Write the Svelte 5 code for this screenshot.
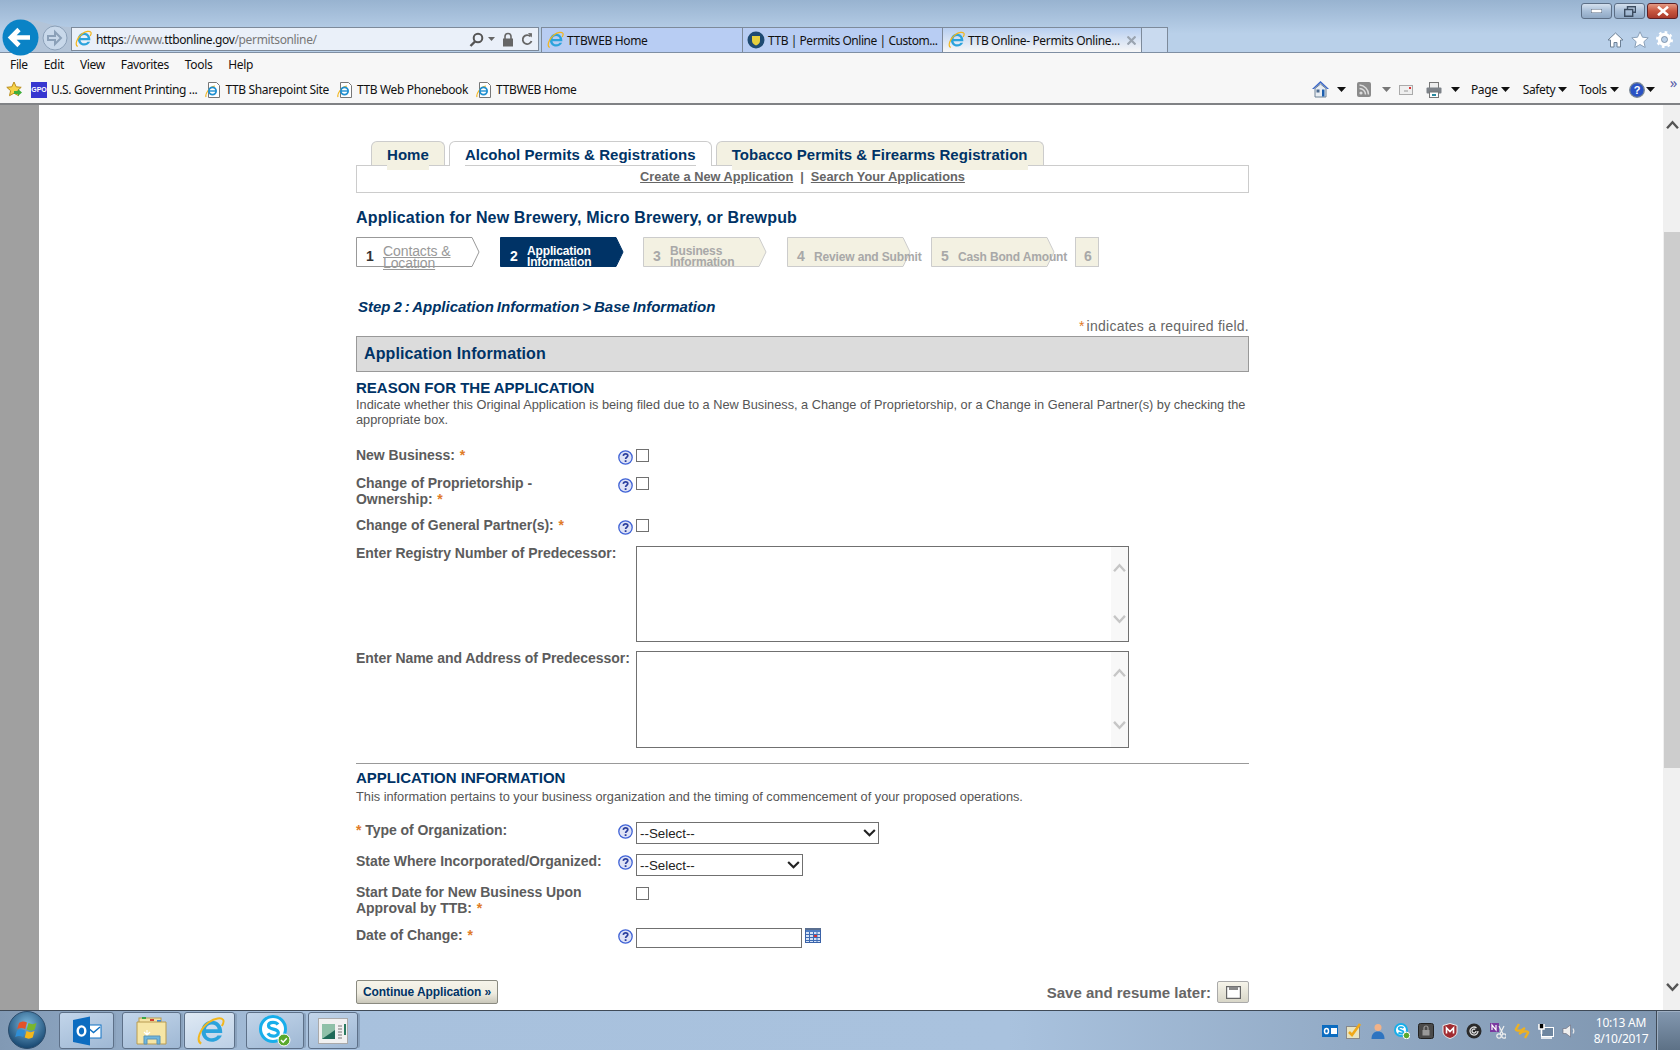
<script>
	const menus = ['File', 'Edit', 'View', 'Favorites', 'Tools', 'Help'];
	const favs = ['TTB Sharepoint Site', 'TTB Web Phonebook', 'TTBWEB Home'];
	const steps = [
		{ n: 1, label: ['Contacts &', 'Location'], cls: 'first' },
		{ n: 2, label: ['Application', 'Information'], cls: 'current' },
		{ n: 3, label: ['Business', 'Information'], cls: 'off two' },
		{ n: 4, label: ['Review and Submit'], cls: 'off' },
		{ n: 5, label: ['Cash Bond Amount'], cls: 'off' }
	];
</script>

{#snippet ie(size)}
	<svg class="ico" width={size} height={size} viewBox="0 0 24 24">
		<path fill="#2ba3dc" fill-rule="evenodd" d="M21.800 13.500H8.600c.3 2.700 2.400 4.300 4.900 4.300 2 0 3.500-.8 4.500-2.200h3.500c-1.400 3-4.400 5-8 5-4.800 0-8.300-3.500-8.300-8.400S8.700 3.800 13.500 3.800s8.500 3.700 8.300 9.700zM8.700 10.500h9.500c-.4-2.300-2.300-3.700-4.700-3.700s-4.400 1.400-4.800 3.700z" />
		<path fill="none" stroke="#f2b61d" stroke-width="1.600" d="M5 22C.5 20 4 10 11 5c5-3.500 10-4 11.500-2 .9 1.300.2 3-1 5" />
	</svg>
{/snippet}

{#snippet docIe()}
	<svg class="ico" width="16" height="16" viewBox="0 0 16 16">
		<path fill="#fff" stroke="#777" d="M3.500 .5h8l3 3v12h-11z" />
		<path fill="none" stroke="#f2b61d" stroke-width="1.200" d="M1 15C0 12 4 5 10 4" />
		<circle cx="7.500" cy="9" r="3.600" fill="none" stroke="#1f8fd0" stroke-width="1.800" />
		<path stroke="#1f8fd0" stroke-width="1.400" d="M4 9h7" />
	</svg>
{/snippet}

{#snippet caret(cls = '')}
	<svg class="caret {cls}" width="9" height="5" viewBox="0 0 9 5"><path d="M0 0h9L4.500 5z" /></svg>
{/snippet}

{#snippet help()}
	<svg class="help" width="15" height="15" viewBox="0 0 15 15">
		<circle cx="7.500" cy="7.500" r="6.700" fill="#dfe3f6" stroke="#3f62d6" stroke-width="1.300" />
		<path fill="none" stroke="#2b3f9e" stroke-width="1.700" d="M5.300 5.800c.2-1.400 1.200-2 2.300-2 1.300 0 2.200.8 2.200 1.900 0 1.500-2.200 1.600-2.200 3.300" />
		<rect x="6.700" y="10.200" width="1.800" height="1.800" fill="#2b3f9e" />
	</svg>
{/snippet}

{#snippet chev(up, color, w)}
	<svg width={w} height={w * 0.7} viewBox="0 0 14 10">
		<path fill="none" stroke={color} stroke-width="2.600" d={up ? 'M1 9l6-6.500 6 6.500' : 'M1 1l6 6.500L13 1'} />
	</svg>
{/snippet}

{#snippet textbox(cls = '')}
	<div class="ta {cls}">
		<textarea></textarea>
		<div class="ta-sb">
			{@render chev(true, '#c6c6c6', 13)}
			{@render chev(false, '#c6c6c6', 13)}
		</div>
	</div>
{/snippet}

{#snippet pick(cls)}
	<div class="pick {cls}">
		<select><option>--Select--</option></select>
		<svg width="13" height="8" viewBox="0 0 14 9"><path fill="none" stroke="#222" stroke-width="2.400" d="M1 1l6 6 6-6" /></svg>
	</div>
{/snippet}

<div class="screen">
	<header class="titlebar">
		<div class="winbar">
			<button class="win">
				<svg width="11" height="4"><rect width="11" height="4" fill="#fff" stroke="#50627a" /></svg>
			</button>
			<button class="win">
				<svg width="12" height="11" viewBox="0 0 12 11"><path fill="none" stroke="#3c4c60" stroke-width="1.400" d="M3.500 3V.7h8v5.600H9M.7 3.500h8v6.800h-8z" /></svg>
			</button>
			<button class="win close">
				<svg width="12" height="10" viewBox="0 0 12 10"><path stroke="#fff" stroke-width="2.600" d="M1 .8l10 8.400M11 .8L1 9.200" /></svg>
			</button>
		</div>
		<div class="navrow">
			<svg class="shoulder" width="54" height="33" viewBox="0 0 54 33">
				<path fill="#b3c4d8" d="M0 0C22 0 30 8 54 8v25H0z" />
			</svg>
			<svg class="back" width="37" height="37" viewBox="0 0 37 37">
				<circle cx="18.500" cy="18.500" r="18" fill="#0a83c6" />
				<path fill="none" stroke="#fff" stroke-width="4.600" d="M28 18.500H10M17 10.500l-8 8 8 8" />
			</svg>
			<svg class="forward" width="26" height="26" viewBox="0 0 26 26">
				<circle cx="13" cy="13" r="12" fill="#c8d8ea" stroke="#8ba0b8" />
				<path fill="none" stroke="#8ba0b8" stroke-width="2" d="M6 11h7V7l6 6-6 6v-4H6z" />
			</svg>
			<div class="address">
				{@render ie(18)}
				<span class="url"><b>https</b>://www.<b>ttbonline.gov</b>/permitsonline/</span>
				<svg class="a-ico" width="15" height="15" viewBox="0 0 15 15"><circle cx="9" cy="6" r="4.300" fill="none" stroke="#555" stroke-width="2" /><path stroke="#555" stroke-width="2.400" d="M6 9.500l-4.500 4.500" /></svg>
				<svg class="a-caret" width="7" height="4"><path d="M0 0h7L3.500 4z" fill="#666" /></svg>
				<svg class="a-ico" width="12" height="15" viewBox="0 0 12 15"><path fill="none" stroke="#666" stroke-width="1.600" d="M3 7V4.500a3 3 0 0 1 6 0V7" /><rect x="1" y="6.500" width="10" height="8" fill="#666" /></svg>
				<svg class="a-ico" width="12" height="15" viewBox="0 0 12 15"><path fill="none" stroke="#666" stroke-width="1.800" d="M9.500 4.500A4.500 4.500 0 1 0 10.500 9" /><path fill="#666" d="M7 1l4 .2-.2 4.300z" /></svg>
			</div>
			<div class="tab-strip">
				<div class="btab one">{@render ie(18)}<span>TTBWEB Home</span></div>
				<div class="btab two">
					<svg class="ico" width="18" height="18" viewBox="0 0 18 18"><circle cx="9" cy="9" r="8.500" fill="#1e4a72" /><path fill="#e6cf3c" d="M5 5h8v5c0 2-2 3.500-4 4.500C7 13.500 5 12 5 10z" /></svg>
					<span>TTB | Permits Online | Custom...</span>
				</div>
				<div class="btab active">
					{@render ie(18)}<span>TTB Online- Permits Online...</span>
					<svg class="x" width="9" height="9" viewBox="0 0 9 9"><path stroke="#9aa4b0" stroke-width="2.200" d="M.5.500l8 8M8.500.500l-8 8" /></svg>
				</div>
				<div class="btab blank"></div>
			</div>
			<div class="ie-tools">
				<svg width="17" height="16" viewBox="0 0 17 16"><path fill="#fff" stroke="#6d8095" d="M8.500 1L1 8h2.500v7h3.500v-4.500h3V15h3.500V8H16z" /></svg>
				<svg width="18" height="17" viewBox="0 0 18 17"><path fill="#fff" stroke="#8aa0b8" d="M9 .8l2.500 5.400 5.700.6-4.300 3.900 1.300 5.800L9 13.500l-5.200 3 1.300-5.800L.8 6.800l5.700-.6z" /></svg>
				<svg width="17" height="17" viewBox="0 0 17 17"><circle cx="8.500" cy="8.500" r="5" fill="none" stroke="#fff" stroke-width="3.600" /><circle cx="8.500" cy="8.500" r="7.400" fill="none" stroke="#fff" stroke-width="2.200" stroke-dasharray="2.600 3.200" /><circle cx="8.500" cy="8.500" r="3" fill="none" stroke="#6d8095" stroke-width=".7" /></svg>
			</div>
		</div>
	</header>

	<div class="toolbars">
		<nav class="menubar">
			{#each menus as m}<span>{m}</span>{/each}
		</nav>
		<div class="favbar">
			<svg class="ico star" width="17" height="17" viewBox="0 0 17 17">
				<path fill="#f7d34a" stroke="#b98d1e" d="M8 1l2.200 4.800 5 .5-3.800 3.400 1.100 5L8 12.200l-4.500 2.500 1.100-5L.8 6.300l5-.5z" />
				<path fill="#3fae3a" d="M8 10h4V8l4 3.500-4 3.500v-2H8z" />
			</svg>
			<span class="gpo">GPO</span>
			<span class="fav first-fav">U.S. Government Printing ...</span>
			{#each favs as f}
				<span class="fav">{@render docIe()}{f}</span>
			{/each}
			<div class="cmd">
				<svg class="c-home" width="17" height="17" viewBox="0 0 17 17"><path fill="#3b67c8" d="M8.500 0L0 8h2L8.500 2 15 8h2z" /><path fill="#e8edf2" stroke="#6e8296" d="M3 7.500L8.500 3 14 7.500V16H3z" /><rect x="4.500" y="8.500" width="3" height="3" fill="#4b6a90" /><rect x="10" y="8.500" width="2.500" height="7" fill="#1d5fae" /></svg>
				{@render caret()}
				<svg class="c-rss" width="14" height="15" viewBox="0 0 14 15"><rect width="14" height="15" rx="2" fill="#8b8b8b" /><circle cx="4" cy="11" r="1.600" fill="#ddd" /><path fill="none" stroke="#ddd" stroke-width="1.500" d="M2.500 6.500a6 6 0 0 1 6 6M2.500 3a9.500 9.500 0 0 1 9 9.500" /></svg>
				{@render caret('dim')}
				<svg class="c-mail" width="14" height="10" viewBox="0 0 14 10"><rect x=".5" y=".5" width="13" height="9" fill="#efefef" stroke="#aaa" /><rect x="10" y="2" width="2" height="2" fill="#d33" /><path stroke="#999" d="M5 6h4" /></svg>
				<svg class="c-print" width="16" height="16" viewBox="0 0 16 16"><rect x="3.500" y=".5" width="9" height="6" fill="#eee" stroke="#777" /><rect x=".5" y="5.500" width="15" height="6" rx="1" fill="#7d8288" /><rect x="3.500" y="10" width="9" height="5.500" fill="#fff" stroke="#777" /><rect x="6" y="12" width="4" height="2" fill="#2a8aa0" /></svg>
				{@render caret()}
				<span class="c-txt pg">Page</span>{@render caret()}
				<span class="c-txt safety">Safety</span>{@render caret()}
				<span class="c-txt tools">Tools</span>{@render caret()}
				<svg class="c-help" width="16" height="16" viewBox="0 0 16 16"><circle cx="8" cy="8" r="7.300" fill="#2a52c4" stroke="#7a8794" stroke-width="1.300" /><text x="8" y="12" text-anchor="middle" font-family="Liberation Sans" font-weight="700" font-size="11" fill="#fff">?</text></svg>
				{@render caret()}
				<span class="more">»</span>
			</div>
		</div>
	</div>

	<div class="viewport">
		<div class="gutter"></div>
		<main class="page">
			<div class="wrap">
				<div class="tabs">
					<a class="tab">
						<span>Home</span>
					</a>
					<a class="tab on">
						<span>Alcohol Permits &amp; Registrations</span>
					</a>
					<a class="tab">
						<span>Tobacco Permits &amp; Firearms Registration</span>
					</a>
				</div>
				<div class="subnav">
					<a>Create a New Application</a><i>|</i><a>Search Your Applications</a>
				</div>

				<h1>Application for New Brewery, Micro Brewery, or Brewpub</h1>

				<ol class="steps">
					{#each steps as s}
						<li class="step {s.cls}">
							<svg class="shape" width="124" height="30" viewBox="0 0 124 30">
								<path d="M.5.500H116l7 14.500-7 14.500H.5z" />
							</svg>
							<b>{s.n}</b>
							<span class="lbl">
								{#each s.label as l}<span>{l}</span>{/each}
							</span>
						</li>
					{/each}
					<li class="step off last"><b>6</b></li>
				</ol>

				<p class="crumb">Step 2 : Application Information &gt; Base Information</p>
				<p class="req"><em>*</em>indicates a required field.</p>

				<h2 class="band">Application Information</h2>

				<h3>REASON FOR THE APPLICATION</h3>
				<p class="intro">Indicate whether this Original Application is being filed due to a New Business, a Change of Proprietorship, or a Change in General Partner(s) by checking the appropriate box.</p>

				<div class="rows upper">
					<div class="row">
						<label>New Business: <em>*</em></label>
						{@render help()}
						<input type="checkbox" />
					</div>
					<div class="row">
						<label>Change of Proprietorship -<br />Ownership: <em>*</em></label>
						{@render help()}
						<input type="checkbox" />
					</div>
					<div class="row">
						<label>Change of General Partner(s): <em>*</em></label>
						{@render help()}
						<input type="checkbox" />
					</div>
					<div class="row wide first-ta">
						<label>Enter Registry Number of Predecessor:</label>
						<span></span>
						{@render textbox('short-ta')}
					</div>
					<div class="row wide">
						<label>Enter Name and Address of Predecessor:</label>
						<span></span>
						{@render textbox()}
					</div>
				</div>

				<hr />

				<h3>APPLICATION INFORMATION</h3>
				<p class="intro">This information pertains to your business organization and the timing of commencement of your proposed operations.</p>

				<div class="rows lower">
					<div class="row typ">
						<label><em class="lead">*</em> Type of Organization:</label>
						{@render help()}
						{@render pick('big')}
					</div>
					<div class="row short">
						<label>State Where Incorporated/Organized:</label>
						{@render help()}
						{@render pick('small')}
					</div>
					<div class="row startd">
						<label>Start Date for New Business Upon<br />Approval by TTB: <em>*</em></label>
						<span></span>
						<input type="checkbox" />
					</div>
					<div class="row">
						<label>Date of Change: <em>*</em></label>
						{@render help()}
						<div class="date">
							<input type="text" />
							<svg width="16" height="15" viewBox="0 0 16 15">
								<rect x=".5" y="1.500" width="15" height="13" fill="#d5e2f6" stroke="#3a62a8" />
								<rect x="0" y="0" width="16" height="2" fill="#5a6f90" />
								<rect x="1" y="2" width="14" height="2" fill="#4f7ec4" />
								<path stroke="#3f6cb4" d="M1 6.500h14M1 9.500h14M1 12.500h14M4.500 4v10M8.500 4v10M12 4v10" />
								<rect x="9" y="7" width="3" height="2" fill="#d33" />
							</svg>
						</div>
					</div>
				</div>

				<div class="actions">
					<button class="go">Continue Application »</button>
					<div class="save">
						<span>Save and resume later:</span>
						<button aria-label="Save">
							<svg width="15" height="13" viewBox="0 0 15 13"><path fill="#fff" stroke="#666" stroke-width="1.200" d="M.6.600h13.800v11.800H.6z" /><path fill="#888" d="M3 .600h9V4H3z" /></svg>
						</button>
					</div>
				</div>
			</div>
		</main>
		<aside class="vbar">
			<div class="vbar-btn">{@render chev(true, '#555', 13)}</div>
			<div class="thumb"></div>
			<div class="vbar-btn dn">{@render chev(false, '#555', 13)}</div>
		</aside>
	</div>

	<footer class="taskbar">
		<svg class="orb" width="38" height="38" viewBox="0 0 38 38">
			<defs>
				<radialGradient id="orbg" cx=".5" cy=".35" r=".7"><stop offset="0" stop-color="#7bb8dd" /><stop offset="1" stop-color="#0e3c66" /></radialGradient>
			</defs>
			<circle cx="19" cy="19" r="18.500" fill="url(#orbg)" stroke="#2b4c6c" />
			<g transform="translate(1 0)">
				<path fill="#e4522a" d="M10 12c3-2 5-2 8-.5l-1.800 6.500c-3-1.500-5-1.500-8 0z" />
				<path fill="#79b62e" d="M19.500 12c3 1.500 5 1.500 8 0l-1.800 6.500c-3 1.500-5 1.500-8 0z" />
				<path fill="#2f8ed6" d="M8 19.500c3-1.500 5-1.500 8 0L14.200 26c-3-1.500-5-1.500-8 0z" />
				<path fill="#f3b71c" d="M17.500 20c3 1.500 5 1.500 8 0l-1.800 6.500c-3 1.500-5 1.500-8 0z" />
			</g>
		</svg>
		<div class="tb b-out">
			<svg width="30" height="30" viewBox="0 0 30 30">
				<rect x="14" y="9" width="15" height="13" fill="#fff" stroke="#1072c4" />
				<path stroke="#1072c4" stroke-width="1.500" fill="none" d="M15 11l6.500 5.500L28 11" />
				<path fill="#0c6cc0" d="M1 4l17-3.500v29L1 26z" />
				<ellipse cx="9.500" cy="15" rx="3.800" ry="4.600" fill="none" stroke="#fff" stroke-width="2.400" />
			</svg>
		</div>
		<div class="tb b-exp">
			<svg width="32" height="30" viewBox="0 0 32 30">
				<rect x="3" y="2" width="22" height="8" fill="#f4e3a4" stroke="#b89b50" />
				<rect x="6" y="1" width="4" height="2" fill="#3aa648" />
				<rect x="14" y="3" width="4" height="2" fill="#d2402e" />
				<rect x="21" y="4" width="4" height="2" fill="#3a8ad8" />
				<path fill="#f6e6a6" stroke="#b89b50" d="M1 6h29v22H1z" />
				<path fill="#6db6de" stroke="#5a93b6" d="M8 28v-8h16v8h-3v-5H11v5z" />
				<path stroke="#fff" stroke-width="1.200" d="M8 16l3 3M11 14v5M14 16l-3 3" />
			</svg>
		</div>
		<div class="tb b-ie active-tb">{@render ie(30)}</div>
		<div class="tb b-sky">
			<svg width="32" height="32" viewBox="0 0 32 32">
				<circle cx="14" cy="14" r="12.500" fill="#fff" stroke="#18aeea" stroke-width="3" />
				<path fill="none" stroke="#18aeea" stroke-width="3.200" d="M19 9.500c-1-1.500-3-2.200-5-2.200-2.500 0-4.500 1.200-4.500 3.400 0 4.600 9.800 2.200 9.800 7 0 2-2.200 3.400-5 3.400-2.400 0-4.400-1-5.400-2.800" />
				<circle cx="25" cy="25" r="6" fill="#5aa92d" stroke="#fff" />
				<path fill="none" stroke="#fff" stroke-width="1.500" d="M22 25l2.200 2.200 3.600-4" />
			</svg>
		</div>
		<div class="tb b-app">
			<svg width="30" height="26" viewBox="0 0 30 26">
				<rect x=".5" y=".5" width="29" height="25" fill="#f1f1f1" stroke="#aaa" />
				<rect x="4" y="6" width="13" height="15" fill="#1f6a58" />
				<path fill="#8fc0a8" d="M4 6h13v6L4 21z" />
				<path stroke="#777" d="M20 8h4M20 11h4M20 14h4M20 17h4M20 20h4" />
				<rect x="26" y="6" width="2" height="11" fill="#2a7a60" />
			</svg>
		</div>
		<div class="tray">
			<svg width="16" height="16" viewBox="0 0 16 16"><rect x="0" y="2" width="16" height="12" fill="#0c6cc0" /><rect x="9" y="5" width="6" height="6" fill="#fff" /><ellipse cx="4.500" cy="8" rx="2" ry="2.600" fill="none" stroke="#fff" stroke-width="1.500" /></svg>
			<svg width="16" height="16" viewBox="0 0 16 16"><rect x=".5" y="3.500" width="13" height="12" fill="#e8e4c0" stroke="#888" /><path fill="none" stroke="#f0a818" stroke-width="2.600" d="M3 9l3 3 8-11" /></svg>
			<svg width="16" height="16" viewBox="0 0 16 16"><circle cx="8" cy="4.500" r="3.500" fill="#f2b288" /><path fill="#2e74c0" d="M1.500 16c0-5 2.500-7.500 6.500-7.500s6.500 2.500 6.500 7.500z" /></svg>
			<svg width="16" height="16" viewBox="0 0 16 16"><circle cx="7" cy="7" r="6" fill="#fff" stroke="#18aeea" stroke-width="2" /><path fill="none" stroke="#18aeea" stroke-width="1.800" d="M9.500 5C8 3.500 4.500 4 4.700 5.800c.2 2 4.800 1 4.800 3.200 0 1.800-3.500 2-5 .5" /><circle cx="12.500" cy="12.500" r="3.300" fill="#5aa92d" stroke="#fff" /></svg>
			<svg width="16" height="16" viewBox="0 0 16 16"><rect x=".5" y=".5" width="15" height="15" rx="2" fill="#4a4a4a" stroke="#222" /><rect x="4.500" y="7" width="7" height="5.500" fill="#999" /><path fill="none" stroke="#999" stroke-width="1.200" d="M6 7V5a2 2 0 0 1 4 0v2" /></svg>
			<svg width="16" height="16" viewBox="0 0 16 16"><path fill="#a02a30" stroke="#eee" d="M1 2.500l7-2 7 2V9c0 3-3.500 5.500-7 6.500C4.500 14.500 1 12 1 9z" /><path fill="none" stroke="#fff" stroke-width="1.600" d="M4.500 10.500V5L8 8.500 11.500 5v5.500" /></svg>
			<svg width="16" height="16" viewBox="0 0 16 16"><circle cx="8" cy="8" r="7.500" fill="#2a2a2a" /><path fill="none" stroke="#ddd" stroke-width="1.300" d="M12 8a4 4 0 1 1-1.500-3.100M10 8a2 2 0 1 1-.8-1.600" /></svg>
			<svg width="16" height="16" viewBox="0 0 16 16"><rect x="0" y="0" width="9" height="9" fill="#7b3aa0" /><path fill="none" stroke="#fff" stroke-width="1.200" d="M2 7V2l4 5V2" /><circle cx="9" cy="13" r="2.200" fill="none" stroke="#eee" stroke-width="1.200" /><circle cx="14" cy="13" r="2.200" fill="none" stroke="#eee" stroke-width="1.200" /><path stroke="#eee" stroke-width="1.200" d="M10 11l4-8M13 11L9 3" /></svg>
			<svg width="16" height="16" viewBox="0 0 16 16"><path fill="none" stroke="#eeb120" stroke-width="2.400" d="M5 1L2 6c-1 2 4 2 6 1l3-2M11 15l3-5c1-2-4-2-6-1l-3 2" /></svg>
			<svg width="16" height="16" viewBox="0 0 16 16"><rect x="3.500" y="4.500" width="12" height="9" fill="#6e86a0" stroke="#fff" /><path stroke="#fff" stroke-width="1.600" d="M1 1v5h5V1M3.500 6v5M3 15h11" /></svg>
			<svg width="16" height="16" viewBox="0 0 16 16"><path fill="#eee" stroke="#667" stroke-width=".6" d="M1 5.500h3L8.500 2v12L4 10.500H1z" /><path fill="none" stroke="#e8e8e8" stroke-width="1.200" d="M11 5.500c1 1.500 1 3.500 0 5" /></svg>
		</div>
		<div class="clock"><span>10:13 AM</span><span>8/10/2017</span></div>
		<div class="peek"></div>
	</footer>
</div>

<style>
	:global(body) {
		margin: 0;
		overflow: hidden;
	}

	.screen {
		width: 1680px;
		height: 1050px;
		display: flex;
		flex-direction: column;
		overflow: hidden;
		font-family: 'Liberation Sans', Arial, sans-serif;
	}

	.ico {
		flex: none;
		display: block;
	}

	/* browser chrome */
	.titlebar {
		height: 53px;
		flex: none;
		background: linear-gradient(#98b3d0, #b9d0e9 65%);
		border-bottom: 1px solid #7f8fa3;
		box-sizing: border-box;
		font-family: 'Noto Sans', sans-serif;
		font-size: 12px;
		letter-spacing: -0.35px;
	}

	.winbar {
		height: 27px;
		display: flex;
		justify-content: flex-end;
		align-items: flex-start;
		gap: 2px;
		padding: 3px 2px 0 0;
		box-sizing: border-box;
	}

	.win {
		width: 31px;
		height: 16px;
		padding: 0;
		display: flex;
		align-items: center;
		justify-content: center;
		border: 1px solid #5d6f86;
		border-radius: 3px;
		background: linear-gradient(#d4e0ee, #a9bfd8 50%, #8fa8c4);
	}

	.win.close {
		border-color: #5d1f24;
		background: linear-gradient(#e39a84, #c8563f 50%, #a93a2c);
	}

	.navrow {
		height: 25px;
		display: flex;
		align-items: stretch;
		position: relative;
	}

	.shoulder {
		position: absolute;
		left: 19px;
		top: -8px;
	}

	.back {
		position: absolute;
		left: 2px;
		top: -8px;
	}

	.forward {
		position: absolute;
		left: 42px;
		top: -2px;
	}

	.address {
		margin-left: 71px;
		width: 468px;
		height: 24px;
		box-sizing: border-box;
		display: flex;
		align-items: center;
		background: #eaf0f9;
		border: 1px solid #7d8a9a;
		padding: 0 5px 0 2px;
		font-size: 12px;
		color: #777;
		position: relative;
	}

	.url {
		flex: 1;
		margin-left: 4px;
	}

	.url b {
		font-weight: 400;
		color: #111;
	}

	.a-ico {
		flex: none;
		margin-left: 7px;
	}

	.a-caret {
		flex: none;
		margin-left: 4px;
	}

	.tab-strip {
		margin-left: 2px;
		display: flex;
		height: 25px;
	}

	.btab {
		height: 25px;
		box-sizing: border-box;
		display: flex;
		align-items: center;
		gap: 3px;
		padding-left: 4px;
		background: #b8cdf3;
		border: 1px solid #7d8a9a;
		border-width: 1px 0 0 1px;
		color: #111;
		white-space: nowrap;
	}

	.btab.one {
		width: 201px;
	}

	.btab.two {
		width: 200px;
		letter-spacing: -0.45px;
	}

	.btab.active {
		width: 199px;
		background: linear-gradient(#b8cff0, #f7f7f7);
		position: relative;
	}

	.btab.blank {
		width: 27px;
		background: #c9daef;
		border-right: 1px solid #7d8a9a;
	}

	.x {
		position: absolute;
		right: 5px;
		top: 8px;
	}

	.ie-tools {
		margin-left: auto;
		display: flex;
		align-items: center;
		gap: 7px;
		padding-right: 7px;
	}

	.toolbars {
		height: 52px;
		flex: none;
		background: #f7f7f7;
		border-bottom: 2px solid #808285;
		box-sizing: border-box;
		font-family: 'Noto Sans', sans-serif;
		font-size: 12px;
		letter-spacing: -0.35px;
		color: #111;
	}

	.menubar {
		height: 23px;
		display: flex;
		align-items: center;
		gap: 16px;
		padding-left: 10px;
	}

	.favbar {
		height: 27px;
		display: flex;
		align-items: center;
		padding-left: 6px;
		white-space: nowrap;
	}

	.star {
		margin-right: 8px;
	}

	.gpo {
		width: 16px;
		height: 16px;
		background: #3737d0;
		color: #fff;
		font: 700 7px/16px 'Liberation Sans', sans-serif;
		text-align: center;
		letter-spacing: 0;
		margin-right: 4px;
	}

	.fav {
		display: flex;
		align-items: center;
		gap: 4px;
		margin-left: 8px;
	}

	.fav.first-fav {
		margin-left: 0;
	}

	.cmd {
		margin-left: auto;
		display: flex;
		align-items: center;
		padding-right: 3px;
		position: relative;
	}

	.caret {
		flex: none;
		fill: #111;
	}

	.caret.dim {
		fill: #777;
	}

	.c-home {
		margin-right: 8px;
	}

	.c-rss {
		margin-left: 11px;
		margin-right: 11px;
	}

	.c-mail {
		margin-left: 8px;
		margin-right: 13px;
	}

	.c-print {
		margin-right: 9px;
	}

	.c-txt {
		margin-right: 3px;
	}

	.c-txt.pg {
		margin-left: 11px;
	}

	.c-txt.safety {
		margin-left: 13px;
	}

	.c-txt.tools {
		margin-left: 12px;
	}

	.c-help {
		margin-left: 10px;
		margin-right: 1px;
	}

	.more {
		margin-left: 15px;
		margin-top: -16px;
		color: #5a5fa8;
		font-size: 15px;
	}

	/* page */
	.viewport {
		flex: 1;
		min-height: 0;
		display: flex;
	}

	.gutter {
		width: 39px;
		background: #a0a0a0;
		flex: none;
	}

	main.page {
		flex: 1;
		min-width: 0;
		background: #fff;
		overflow: hidden;
	}

	.wrap {
		width: 893px;
		margin-left: 317px;
		padding-top: 36px;
	}

	.vbar {
		width: 17px;
		flex: none;
		background: #f0f0f0;
		display: flex;
		flex-direction: column;
		position: relative;
	}

	.vbar-btn {
		height: 40px;
		display: flex;
		align-items: center;
		justify-content: center;
		padding-left: 1px;
	}

	.vbar-btn.dn {
		margin-top: auto;
		height: 30px;
		margin-bottom: 7px;
	}

	.thumb {
		position: absolute;
		left: 1px;
		right: 0;
		top: 127px;
		height: 536px;
		background: #cdcdcd;
	}

	/* tabs */
	.tabs {
		display: flex;
		gap: 4px;
		padding-left: 15px;
		height: 24px;
	}

	.tab {
		height: 24px;
		box-sizing: border-box;
		padding: 4px 15px 0;
		background: #f3f1e2;
		border: 1px solid #ccc;
		border-bottom: 0;
		border-radius: 6px 6px 0 0;
		color: #003366;
		font-size: 15px;
		font-weight: 700;
		line-height: 18px;
		letter-spacing: 0.05px;
		white-space: nowrap;
	}

	.tab span {
		display: inline-block;
		height: 18px;
		padding-bottom: 1px;
		border-bottom: 5px solid #f3f1e2;
	}

	.tab.on {
		background: #fff;
		height: 25px;
		position: relative;
	}

	.tab.on span {
		border-bottom: 1px solid #ccc;
	}

	.subnav {
		height: 28px;
		box-sizing: border-box;
		border: 1px solid #ccc;
		text-align: center;
		font-size: 12.8px;
		font-weight: 700;
		line-height: 22px;
		color: #666;
	}

	.subnav a {
		text-decoration: underline;
	}

	.subnav i {
		font-style: normal;
		margin: 0 7px;
	}

	h1 {
		margin: 15px 0 0;
		font-size: 16px;
		line-height: 20px;
		letter-spacing: 0.16px;
		color: #003366;
	}

	/* wizard steps */
	.steps {
		list-style: none;
		margin: 9px 0 0;
		padding: 0;
		display: flex;
		gap: 20px;
		height: 30px;
	}

	.step {
		position: relative;
		width: 124px;
		height: 30px;
		box-sizing: border-box;
		padding: 6px 0 0 10px;
		display: flex;
		align-items: center;
		color: #a8a8a8;
		font-size: 12px;
		font-weight: 700;
		white-space: nowrap;
		letter-spacing: -0.15px;
	}

	.step.two {
		margin-left: -1px;
	}

	.shape {
		position: absolute;
		left: 0;
		top: 0;
	}

	.shape path {
		fill: #f3f1e2;
		stroke: #ccc;
	}

	.step b {
		position: relative;
		width: 17px;
		flex: none;
		font-size: 14px;
		letter-spacing: 0;
		padding-top: 2px;
	}

	.lbl {
		position: relative;
		display: flex;
		flex-direction: column;
		line-height: 11px;
		padding-top: 3px;
	}

	.off .lbl {
		padding-top: 4px;
	}

	.first .shape path {
		fill: #fff;
		stroke: #999;
	}

	.first b {
		color: #333;
	}

	.first .lbl {
		color: #999;
		font-size: 14px;
		font-weight: 400;
		letter-spacing: -0.1px;
		line-height: 12px;
		text-decoration: underline;
	}

	.current .shape path {
		fill: #003366;
		stroke: #003366;
	}

	.current {
		color: #fff;
	}

	.step.last {
		width: 24px;
		padding: 5px 0 0 8px;
		background: #f3f1e2;
		border: 1px solid #ccc;
	}

	.crumb {
		margin: 30px 0 0 2px;
		color: #003366;
		font-size: 15px;
		font-weight: 700;
		font-style: italic;
		line-height: 20px;
		word-spacing: -1.2px;
	}

	.req {
		margin: 1px 0 0;
		text-align: right;
		color: #666;
		font-size: 14px;
		line-height: 17px;
		letter-spacing: 0.25px;
	}

	.req em {
		margin-right: 2px;
	}

	em {
		font-style: normal;
		color: #e07b28;
	}

	.band {
		margin: 1px 0 0;
		height: 36px;
		box-sizing: border-box;
		background: #dcdcdc;
		border: 1px solid #999;
		color: #003366;
		font-size: 16px;
		line-height: 34px;
		letter-spacing: 0.1px;
		padding-left: 7px;
	}

	h3 {
		margin: 7px 0 0;
		color: #003366;
		font-size: 15px;
		line-height: 18px;
	}

	.intro {
		margin: 0;
		color: #555;
		font-size: 12.75px;
		line-height: 15px;
	}

	/* form rows */
	.upper {
		margin-top: 20px;
	}

	.lower {
		margin-top: 18px;
	}

	.row {
		display: grid;
		grid-template-columns: 262px 18px 1fr;
		align-items: start;
		min-height: 27px;
		padding-bottom: 10px;
		box-sizing: border-box;
	}

	.row.wide {
		padding-bottom: 7px;
	}

	.row.first-ta {
		padding-bottom: 8px;
	}

	.lower .row {
		padding-bottom: 9px;
	}

	.lower .row.typ {
		padding-bottom: 9px;
	}

	.typ .pick {
		margin-top: 0;
	}

	.lower .row.short {
		padding-bottom: 0;
		min-height: 31px;
	}

	.lower .row.startd {
		padding-bottom: 11px;
	}

	label {
		color: #5c5c5c;
		font-size: 14px;
		font-weight: 700;
		line-height: 16px;
		letter-spacing: -0.05px;
		white-space: nowrap;
	}

	label em {
		margin-left: 1px;
	}

	label em.lead {
		margin-left: 0;
	}

	.help {
		display: block;
		margin-top: 3px;
	}

	.lower .help {
		margin-top: 2px;
	}

	input[type='checkbox'] {
		appearance: none;
		width: 13px;
		height: 13px;
		margin: 2px 0 0;
		box-sizing: border-box;
		background: #fff;
		border: 1px solid #707070;
	}

	.lower input[type='checkbox'] {
		margin-top: 3px;
	}

	.ta {
		display: flex;
		width: 493px;
		height: 97px;
		box-sizing: border-box;
		border: 1px solid #707070;
		margin-top: 1px;
	}

	.ta.short-ta {
		height: 96px;
	}

	.ta textarea {
		flex: 1;
		border: 0;
		outline: 0;
		resize: none;
		margin: 0;
		padding: 0;
	}

	.ta-sb {
		width: 17px;
		flex: none;
		background: #f8f8f8;
		display: flex;
		flex-direction: column;
		justify-content: space-between;
		align-items: center;
		padding: 16px 0 17px;
		box-sizing: border-box;
	}

	hr {
		margin: 8px 0 0;
		border: 0;
		border-top: 1px solid #999;
	}

	hr + h3 {
		margin-top: 5px;
	}

	hr + h3 + .intro {
		margin-top: 2px;
	}

	.pick {
		position: relative;
		height: 22px;
		margin-top: 1px;
	}

	.pick.big {
		width: 243px;
	}

	.pick.small {
		width: 167px;
	}

	.pick select {
		appearance: none;
		width: 100%;
		height: 22px;
		box-sizing: border-box;
		border: 1px solid #707070;
		border-radius: 0;
		background: #fff;
		color: #222;
		font: 13.33px 'Liberation Sans', sans-serif;
		padding: 0 0 0 3px;
	}

	.pick svg {
		position: absolute;
		right: 3px;
		top: 7px;
	}

	.date {
		display: flex;
		align-items: flex-start;
		gap: 3px;
		margin-top: 1px;
	}

	.date input {
		width: 166px;
		height: 20px;
		box-sizing: border-box;
		border: 1px solid #707070;
		padding: 0;
	}

	.actions {
		margin-top: 23px;
		display: flex;
		justify-content: space-between;
		align-items: center;
	}

	.go {
		width: 142px;
		height: 24px;
		padding: 0;
		border: 1px solid #8a8a80;
		border-radius: 2px;
		background: linear-gradient(#f6f4ea, #efece0 55%, #c9c7ba);
		color: #003366;
		font: 700 12px 'Liberation Sans', sans-serif;
		letter-spacing: -0.1px;
	}

	.save {
		display: flex;
		align-items: center;
		gap: 6px;
		color: #666;
		font-size: 15px;
		font-weight: 700;
	}

	.save button {
		width: 32px;
		height: 22px;
		padding: 0;
		display: flex;
		align-items: center;
		justify-content: center;
		border: 1px solid #aaa;
		border-radius: 2px;
		background: linear-gradient(#f6f4ea, #d8d6c8);
	}

	/* taskbar */
	.taskbar {
		height: 40px;
		flex: none;
		display: flex;
		align-items: stretch;
		background: linear-gradient(90deg, #8199b4, #a8c1dd 18%, #a9c2de 60%, #7d94ae);
		border-top: 1px solid #3f4a57;
		box-sizing: border-box;
		position: relative;
	}

	.orb {
		position: absolute;
		left: 8px;
		top: 0;
	}

	.tb {
		margin-top: 1px;
		margin-bottom: 1px;
		display: flex;
		align-items: center;
		justify-content: center;
		box-sizing: border-box;
		border: 1px solid #5d7088;
		border-radius: 3px;
		background: linear-gradient(160deg, #c2d5ea, #9fb8d4);
		box-shadow: 3px 0 0 -1px #8aa2bd;
	}

	.active-tb {
		background: linear-gradient(160deg, #dfe9f4, #bcd0e6);
	}

	.b-out {
		margin-left: 59px;
		width: 55px;
	}

	.b-exp {
		margin-left: 8px;
		width: 59px;
	}

	.b-ie {
		margin-left: 3px;
		width: 51px;
	}

	.b-sky {
		margin-left: 11px;
		width: 58px;
	}

	.b-app {
		margin-left: 4px;
		width: 50px;
	}

	.tray {
		margin-left: auto;
		display: flex;
		align-items: center;
		gap: 8px;
	}

	.clock {
		width: 70px;
		margin-left: 8px;
		display: flex;
		flex-direction: column;
		align-items: center;
		justify-content: center;
		color: #fff;
		font-family: 'Noto Sans', sans-serif;
		font-size: 12px;
		line-height: 16px;
		letter-spacing: -0.25px;
	}

	.peek {
		width: 23px;
		background: linear-gradient(#8398b0, #5d7186);
		border-left: 1px solid #3f4a57;
		box-shadow: inset 1px 1px 0 #9fb0c4;
	}
</style>
